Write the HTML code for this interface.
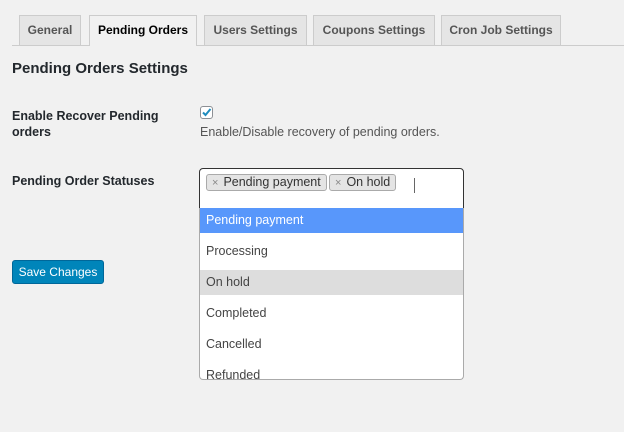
<!DOCTYPE html>
<html><head><style>
body{margin:0;width:624px;height:432px;background:#f1f1f1;font-family:"Liberation Sans",sans-serif;color:#23282d;position:relative;overflow:hidden}
.a{position:absolute}
.tab{position:absolute;top:15px;height:30px;box-sizing:border-box;border:1px solid #ccc;border-bottom:none;background:#e5e5e5;font-size:12px;font-weight:bold;color:#555;text-align:center;line-height:29px}
.tab.on{background:#f1f1f1;color:#000;height:31px}
.lbl{font-size:12.5px;font-weight:bold;color:#23282d}
.opt{position:absolute;left:0;width:100%;height:25px;line-height:25px;padding-left:6px;box-sizing:border-box;font-size:12.5px;color:#444}
.tag{position:absolute;top:5px;height:17px;box-sizing:border-box;border:1px solid #aaa;border-radius:3px;background:#e4e4e4;font-size:12.5px;line-height:15px;padding:0 5px;color:#333}
.tag b{color:#888;font-weight:normal;font-size:11px;margin-right:5px}
</style></head><body>
<div class="a" style="left:12px;top:45px;width:612px;height:1px;background:#ccc"></div>
<div class="tab" style="left:19px;width:62px">General</div>
<div class="tab on" style="left:89px;width:108px">Pending Orders</div>
<div class="tab" style="left:204px;width:103px">Users Settings</div>
<div class="tab" style="left:313px;width:122px">Coupons Settings</div>
<div class="tab" style="left:441px;width:120px">Cron Job Settings</div>
<div class="a" style="left:12px;top:60px;font-size:15px;font-weight:bold">Pending Orders Settings</div>
<div class="a lbl" style="left:12px;top:108px;line-height:16px">Enable Recover Pending<br>orders</div>
<div class="a" style="left:200px;top:106px;width:13px;height:13px;border:1px solid #8c8f94;border-radius:3px;background:#fff;box-sizing:border-box">
<svg width="11" height="11" viewBox="0 0 11 11" style="position:absolute;left:0;top:0"><path d="M2 5.5L4.5 8L9.5 2" stroke="#1e8cbe" stroke-width="2" fill="none"/></svg></div>
<div class="a" style="left:200px;top:125px;font-size:12.5px;color:#555">Enable/Disable recovery of pending orders.</div>
<div class="a lbl" style="left:12px;top:174px">Pending Order Statuses</div>
<div class="a" style="left:199px;top:168px;width:265px;height:41px;box-sizing:border-box;border:1px solid #333;border-radius:4px 4px 0 0;background:#fff">
<div class="tag" style="left:6px"><b>×</b>Pending payment</div>
<div class="tag" style="left:129px"><b>×</b>On hold</div>
<div class="a" style="left:214px;top:9px;width:1px;height:15px;background:#666"></div>
</div>
<div class="a" style="left:199px;top:208px;width:265px;height:172px;box-sizing:border-box;border:1px solid #aaa;border-top:none;border-radius:0 0 4px 4px;background:#fff;overflow:hidden">
<div class="opt" style="top:0;background:#5897fb;color:#fff">Pending payment</div>
<div class="opt" style="top:31px">Processing</div>
<div class="opt" style="top:62px;background:#ddd">On hold</div>
<div class="opt" style="top:93px">Completed</div>
<div class="opt" style="top:124px">Cancelled</div>
<div class="opt" style="top:155px">Refunded</div>
</div>
<div class="a" style="left:12px;top:260px;width:92px;height:24px;background:#0085ba;border:1px solid #006799;box-sizing:border-box;border-radius:3px;color:#fff;font-size:12px;text-align:center;line-height:22px">Save Changes</div>
</body></html>
